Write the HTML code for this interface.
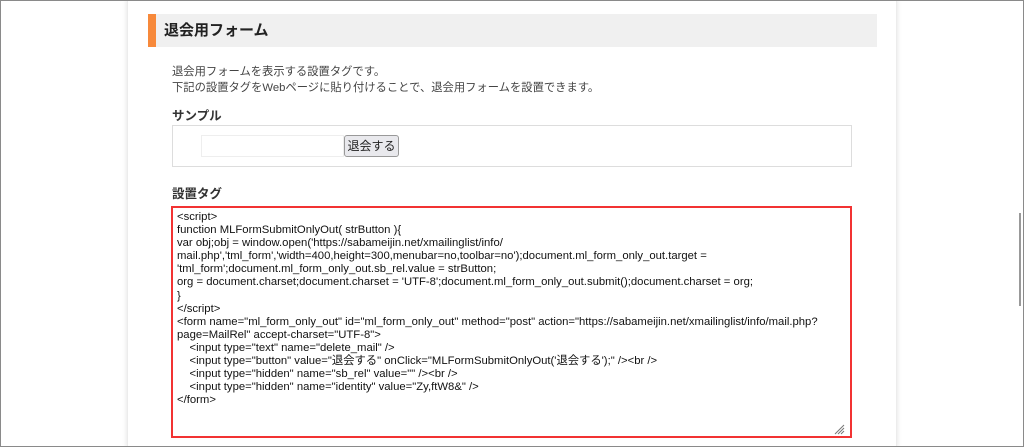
<!DOCTYPE html>
<html><head><meta charset="utf-8"><style>
*{margin:0;padding:0;box-sizing:border-box}
html,body{width:1024px;height:447px;overflow:hidden;background:#fff}
body{position:relative;font-family:"Liberation Sans","Noto Sans CJK JP",sans-serif;color:#333}
.frame{position:absolute;left:0;top:0;width:1024px;height:447px;border:1px solid #8a8a8a;z-index:10;pointer-events:none}
.col{position:absolute;left:127px;top:0;width:770px;height:447px;background:#fff;box-shadow:-2px 0 3px rgba(0,0,0,.06),2px 0 3px rgba(0,0,0,.06);border-left:1px solid #ececec;border-right:1px solid #ececec}
.hd{position:absolute;left:148px;top:14px;width:729px;height:33px;background:#f0f0f0;border-left:8px solid #f7893b;font-size:15px;font-weight:bold;line-height:33px;padding-left:8px;color:#222}
.p{position:absolute;left:172px;font-size:11.3px;color:#444}
.h3{position:absolute;left:172px;font-size:12.5px;font-weight:bold;color:#333}
.sample{position:absolute;left:172px;top:125px;width:680px;height:42px;border:1px solid #ddd}
.inp{position:absolute;left:201px;top:135px;width:143px;height:22px;border:1px solid #eee;background:#fff}
.btn{position:absolute;left:344px;top:135px;width:55px;height:22px;border:1px solid #999;border-radius:3px;background:#e9e9ed;font-size:12px;text-align:center;line-height:20px;color:#222}
.ta{position:absolute;left:171px;top:206px;width:681px;height:232px;border:2px solid #f23333;padding:3px 4px;font-size:11.3px;line-height:13.1px;color:#111;white-space:pre}
.grip{position:absolute;left:833px;top:423px}
.sb{position:absolute;left:1019px;top:213px;width:2px;height:93px;background:#999}
</style></head><body>
<div class="col"></div>
<div class="hd">退会用フォーム</div>
<div class="p" style="top:63px">退会用フォームを表示する設置タグです。</div>
<div class="p" style="top:79px">下記の設置タグをWebページに貼り付けることで、退会用フォームを設置できます。</div>
<div class="h3" style="top:105px">サンプル</div>
<div class="sample"></div>
<div class="inp"></div>
<div class="btn">退会する</div>
<div class="h3" style="top:183px">設置タグ</div>
<div class="ta">&lt;script&gt;
function MLFormSubmitOnlyOut( strButton ){
var obj;obj = window.open('https://sabameijin.net/xmailinglist/info/
mail.php','tml_form','width=400,height=300,menubar=no,toolbar=no');document.ml_form_only_out.target =
'tml_form';document.ml_form_only_out.sb_rel.value = strButton;
org = document.charset;document.charset = 'UTF-8';document.ml_form_only_out.submit();document.charset = org;
}
&lt;/script&gt;
&lt;form name="ml_form_only_out" id="ml_form_only_out" method="post" action="https://sabameijin.net/xmailinglist/info/mail.php?
page=MailRel" accept-charset="UTF-8"&gt;
    &lt;input type="text" name="delete_mail" /&gt;
    &lt;input type="button" value="退会する" onClick="MLFormSubmitOnlyOut('退会する');" /&gt;&lt;br /&gt;
    &lt;input type="hidden" name="sb_rel" value="" /&gt;&lt;br /&gt;
    &lt;input type="hidden" name="identity" value="Zy,ftW8&amp;" /&gt;
&lt;/form&gt;</div>
<svg class="grip" width="12" height="12" viewBox="0 0 12 12"><path d="M11 2L2 11M11 5L5 11M11 8L8 11" stroke="#777" stroke-width="1"/></svg>
<div class="sb"></div>
<div class="frame"></div>
</body></html>
